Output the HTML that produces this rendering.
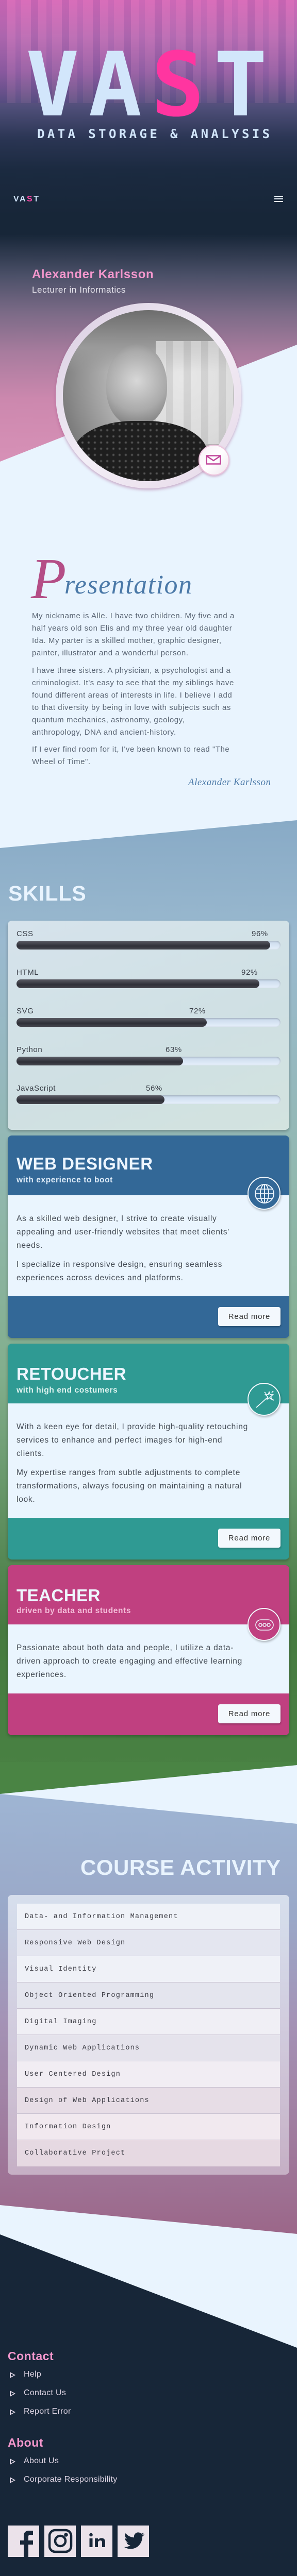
<!DOCTYPE html>
<html style="width:576px;height:5074px;overflow:hidden"><head><meta charset="utf-8"><style>
*{margin:0;padding:0;box-sizing:border-box}
body{width:576px;height:5074px;position:relative;overflow:hidden;background:#e9f4fe;font-family:"Liberation Sans",sans-serif}
.a{position:absolute}
.nw{white-space:nowrap}
.mono{font-family:"DejaVu Sans Mono","Liberation Mono",monospace}
.p{color:#5b6675;font-size:15px;line-height:24px;letter-spacing:.55px;left:62px}
.card{position:absolute;left:15px;width:546px;border-radius:8px;overflow:hidden;box-shadow:0 3px 6px rgba(0,0,0,.25)}
.card .body{position:absolute;left:0;width:546px;background:#eaf5fe}
.card h2{position:absolute;left:17px;color:#eef6ff;font-size:33px;font-weight:bold;letter-spacing:.5px}
.card h3{position:absolute;left:17px;font-size:15.5px;font-weight:bold;letter-spacing:.6px}
.card .t{position:absolute;left:17px;color:#444b55;font-size:15.5px;line-height:26px;letter-spacing:.75px;white-space:nowrap}
.btn{position:absolute;left:408px;width:121px;height:37px;background:#f3f8fd;border-radius:4px;box-shadow:1px 2px 3px rgba(0,0,0,.25);color:#333;font-size:15px;letter-spacing:.8px;text-align:center;line-height:37px}
.ic{position:absolute;left:465px;width:64px;height:64px;border-radius:50%;border:2px solid #f2f8fd;box-shadow:1px 2px 4px rgba(0,0,0,.3)}
.lbl{position:absolute;color:#3a3f48;font-size:15px;letter-spacing:.6px}
.trk{position:absolute;left:17px;width:512px;height:17px;border-radius:9px;background:linear-gradient(#c8d8ea,#e6f0fb);box-shadow:inset 0 1px 3px rgba(0,0,0,.25)}
.fill{position:absolute;left:0;top:0;height:17px;border-radius:9px;background:linear-gradient(#5a5b64,#2f3038 60%,#45464e)}
.row{position:absolute;left:18px;width:510px;height:51px;border-bottom:1px solid #c9c2d2;color:#3c3c44;font-family:"Liberation Mono",monospace;font-size:13.5px;letter-spacing:1.2px;line-height:51px;padding-left:15px}
.fl{position:absolute;left:46px;color:#ded5e4;font-size:16px;letter-spacing:.3px}
.tri{position:absolute;left:19px;width:0;height:0;border-left:11px solid #ded5e4;border-top:6px solid transparent;border-bottom:6px solid transparent}
.tri:after{content:"";position:absolute;left:-9px;top:-3.5px;border-left:6px solid #172638;border-top:3.5px solid transparent;border-bottom:3.5px solid transparent}
.soc{position:absolute;top:4902px;width:61px;height:61px;background:#ebe2ea}
</style></head><body>

<div class="a" style="left:0;top:0;width:576px;height:460px;background:linear-gradient(#d468b4 0px,#b26cb0 70px,#8a5c9e 140px,#4e4e78 210px,#2a3553 270px,#1b2a40 330px,#172638 420px,#172638 460px)"></div>
<div class="a" style="left:0;top:0;width:576px;height:200px;opacity:.3;background:repeating-linear-gradient(90deg,rgba(80,60,140,.6) 0 14px,rgba(230,150,210,.4) 14px 30px,rgba(120,90,170,.5) 30px 41px,rgba(250,170,220,.3) 41px 60px)"></div>
<div class="a" style="left:0;top:0;width:576px;height:200px;background:linear-gradient(rgba(220,110,190,.3),rgba(0,0,0,0))"></div>
<div class="a mono nw" style="left:50px;top:50px;font-size:172px;font-weight:bold;letter-spacing:18px;color:#d2e6fb;line-height:230px">VA<span style="color:#ff35a0">S</span>T</div>
<div class="a mono nw" style="left:72px;top:246px;font-size:24px;font-weight:bold;letter-spacing:5.4px;color:#d2e6fb">DATA STORAGE &amp; ANALYSIS</div>
<div class="a nw" style="left:26px;top:378px;font-size:16px;font-weight:bold;letter-spacing:2.5px;color:#d2e6fb">VA<span style="color:#ff4aa8">S</span>T</div>
<div class="a" style="left:532px;top:380px;width:17px;height:2px;background:#e9f1fa;box-shadow:0 5px 0 #e9f1fa,0 10px 0 #e9f1fa"></div>

<div class="a" style="left:0;top:455px;width:576px;height:460px;background:linear-gradient(#172638 0px,#4b5068 80px,#7a6a86 150px,#a87c9e 230px,#cc88ae 320px,#d992b8 460px)"></div>
<svg class="a" style="left:0;top:660px" width="576" height="260"><polygon points="0,236 576,9 576,260 0,260" fill="#e9f4fe"/></svg>
<div class="a nw" style="left:62px;top:519px;font-size:24px;font-weight:bold;color:#f497cd;letter-spacing:.6px">Alexander Karlsson</div>
<div class="a nw" style="left:62px;top:553px;font-size:17px;color:#e8e6ee;letter-spacing:.6px">Lecturer in Informatics</div>
<div class="a" style="left:108px;top:588px;width:360px;height:360px;border-radius:50%;background:linear-gradient(135deg,#d8cbe0,#f3eef6 50%,#e6d8e8);box-shadow:0 3px 6px rgba(150,60,120,.4)"></div>
<div class="a" style="left:122px;top:602px;width:332px;height:332px;border-radius:50%;overflow:hidden;background:radial-gradient(circle at 70% 40%,#e6e6e6,#bdbdbd 40%,#8a8a8a 70%,#555)">
 <div class="a" style="left:0;top:0;width:332px;height:120px;background:linear-gradient(#6d6d6d,#9a9a9a 60%,rgba(180,180,180,0))"></div>
 <div class="a" style="left:180px;top:60px;width:150px;height:200px;background:repeating-linear-gradient(90deg,#e8e8e8 0 20px,#cfcfcf 20px 34px);opacity:.7"></div>
 <div class="a" style="left:84px;top:66px;width:118px;height:158px;border-radius:50% 50% 45% 45%;background:radial-gradient(circle at 50% 45%,#d8d8d8,#aaa 55%,#6a6a6a)"></div>
 <div class="a" style="left:20px;top:215px;width:260px;height:140px;border-radius:45% 45% 0 0;background:radial-gradient(circle,#555 1px,#1e1e1e 3px);background-size:12px 12px"></div>
</div>
<div class="a" style="left:385px;top:863px;width:60px;height:60px;border-radius:50%;background:linear-gradient(135deg,#f7eef5,#fff 50%,#efe4ee);border:2px solid #ecc3dc;box-shadow:0 2px 4px rgba(160,60,120,.4)"></div>
<svg class="a" style="left:399px;top:883px" width="32" height="20"><rect x="1.5" y="1.5" width="27" height="16" fill="none" stroke="#c0449a" stroke-width="2.5"/><polyline points="1.5,2 15,11 28.5,2" fill="none" stroke="#c0449a" stroke-width="2.5"/></svg>

<div class="a nw" style="left:60px;top:1064px;font-family:'Liberation Serif',serif;font-style:italic;font-size:112px;color:#b44d86;line-height:120px">P</div>
<div class="a nw" style="left:125px;top:1106px;font-family:'Liberation Serif',serif;font-style:italic;font-size:52px;color:#4b79a8;letter-spacing:1.5px;line-height:60px">resentation</div>
<div class="a p nw" style="top:1184px">My nickname is Alle. I have two children. My five and a<br>half years old son Elis and my three year old daughter<br>Ida. My parter is a skilled mother, graphic designer,<br>painter, illustrator and a wonderful person.</div>
<div class="a p nw" style="top:1290px">I have three sisters. A physician, a psychologist and a<br>criminologist. It's easy to see that the my siblings have<br>found different areas of interests in life. I believe I add<br>to that diversity by being in love with subjects such as<br>quantum mechanics, astronomy, geology,<br>anthropology, DNA and ancient-history.</div>
<div class="a p nw" style="top:1443px">If I ever find room for it, I've been known to read "The<br>Wheel of Time".</div>
<div class="a nw" style="left:365px;top:1508px;font-family:'Liberation Serif',serif;font-style:italic;font-size:19px;color:#4b79a8;letter-spacing:.5px">Alexander Karlsson</div>

<svg class="a" style="left:0;top:1590px" width="576" height="1960"><defs><linearGradient id="g1" x1="0" y1="0" x2="0" y2="1"><stop offset="0" stop-color="#88aac6"/><stop offset=".12" stop-color="#9ab9cf"/><stop offset=".35" stop-color="#92b8b0"/><stop offset=".55" stop-color="#82ae8c"/><stop offset=".8" stop-color="#467a40"/><stop offset="1" stop-color="#4a8444"/></linearGradient></defs><polygon points="0,56 576,2 576,1960 0,1960" fill="url(#g1)"/></svg>
<div class="a nw" style="left:16px;top:1711px;font-size:41px;font-weight:bold;color:#e9f4fe;letter-spacing:1px">SKILLS</div>

<div class="card" style="top:1787px;height:406px;background:linear-gradient(160deg,#d6e3ec,#cfe0e3 60%,#d3e3df)">
 <div class="lbl" style="left:17px;top:17px">CSS</div><div class="lbl" style="left:473px;top:17px">96%</div>
 <div class="trk" style="top:39px"><div class="fill" style="width:492px"></div></div>
 <div class="lbl" style="left:17px;top:92px">HTML</div><div class="lbl" style="left:453px;top:92px">92%</div>
 <div class="trk" style="top:114px"><div class="fill" style="width:471px"></div></div>
 <div class="lbl" style="left:17px;top:167px">SVG</div><div class="lbl" style="left:352px;top:167px">72%</div>
 <div class="trk" style="top:189px"><div class="fill" style="width:369px"></div></div>
 <div class="lbl" style="left:17px;top:242px">Python</div><div class="lbl" style="left:306px;top:242px">63%</div>
 <div class="trk" style="top:264px"><div class="fill" style="width:323px"></div></div>
 <div class="lbl" style="left:17px;top:317px">JavaScript</div><div class="lbl" style="left:268px;top:317px">56%</div>
 <div class="trk" style="top:339px"><div class="fill" style="width:287px"></div></div>
</div>

<div class="card" style="top:2204px;height:393px;background:#336897">
 <h2 class="nw" style="top:36px">WEB DESIGNER</h2>
 <h3 class="nw" style="top:78px;color:#dceaf7">with experience to boot</h3>
 <div class="body" style="top:116px;height:196px"></div>
 <div class="ic" style="top:80px;background:#336897"></div>
 <svg class="a" style="left:478px;top:93px" width="40" height="40" fill="none" stroke="#eef6fd" stroke-width="1.8"><circle cx="20" cy="20" r="18"/><ellipse cx="20" cy="20" rx="8" ry="18"/><line x1="20" y1="2" x2="20" y2="38"/><line x1="2" y1="20" x2="38" y2="20"/><line x1="5" y1="11" x2="35" y2="11"/><line x1="5" y1="29" x2="35" y2="29"/></svg>
 <div class="t" style="top:149px">As a skilled web designer, I strive to create visually<br>appealing and user-friendly websites that meet clients'<br>needs.</div>
 <div class="t" style="top:238px">I specialize in responsive design, ensuring seamless<br>experiences across devices and platforms.</div>
 <div class="btn" style="top:333px">Read more</div>
</div>

<div class="card" style="top:2608px;height:419px;background:#2f9a93">
 <h2 class="nw" style="top:40px">RETOUCHER</h2>
 <h3 class="nw" style="top:82px;color:#dff3f0">with high end costumers</h3>
 <div class="body" style="top:116px;height:222px"></div>
 <div class="ic" style="top:76px;background:#2f9a93"></div>
 <svg class="a" style="left:478px;top:88px" width="40" height="40" fill="none" stroke="#eef6fd" stroke-width="1.8"><line x1="4" y1="36" x2="24" y2="18"/><polygon points="29,6 31,11 36,11 32,15 34,20 29,17 25,20 26,15 22,11 27,11"/><line x1="20" y1="6" x2="23" y2="9"/><line x1="37" y1="4" x2="34" y2="7"/><line x1="38" y1="22" x2="35" y2="20"/></svg>
 <div class="t" style="top:149px">With a keen eye for detail, I provide high-quality retouching<br>services to enhance and perfect images for high-end<br>clients.</div>
 <div class="t" style="top:238px">My expertise ranges from subtle adjustments to complete<br>transformations, always focusing on maintaining a natural<br>look.</div>
 <div class="btn" style="top:359px">Read more</div>
</div>

<div class="card" style="top:3038px;height:330px;background:#c04080">
 <h2 class="nw" style="top:40px">TEACHER</h2>
 <h3 class="nw" style="top:80px;color:#f4bcd9">driven by data and students</h3>
 <div class="body" style="top:115px;height:134px"></div>
 <div class="ic" style="top:83px;background:#c04080"></div>
 <svg class="a" style="left:478px;top:96px" width="40" height="40" fill="none" stroke="#eef6fd" stroke-width="1.6"><rect x="3" y="10" width="34" height="20" rx="10"/><circle cx="12" cy="20" r="3"/><circle cx="20" cy="20" r="3"/><circle cx="28" cy="20" r="3"/></svg>
 <div class="t" style="top:148px">Passionate about both data and people, I utilize a data-<br>driven approach to create engaging and effective learning<br>experiences.</div>
 <div class="btn" style="top:270px">Read more</div>
</div>

<svg class="a" style="left:0;top:3420px" width="576" height="1000"><defs><linearGradient id="g2" x1="0" y1="0" x2="0" y2="1"><stop offset="0" stop-color="#9fb8d6"/><stop offset=".3" stop-color="#9aa8c8"/><stop offset=".5" stop-color="#a493b6"/><stop offset="1" stop-color="#9a5e80"/></linearGradient></defs><rect width="576" height="1000" fill="url(#g2)"/><polygon points="0,62 576,6 576,120" fill="#e9f4fe"/><polygon points="0,0 576,0 576,6 0,62" fill="#4a8444"/></svg>
<div class="a nw" style="left:156px;top:3601px;font-size:42px;font-weight:bold;color:#e9f4fe;letter-spacing:.5px">COURSE ACTIVITY</div>
<div class="a" style="left:15px;top:3678px;width:546px;height:543px;border-radius:8px;background:linear-gradient(rgba(235,240,248,.75),rgba(230,225,235,.55))">
 <div class="row nw" style="top:17px;background:#eff2f8">Data- and Information Management</div>
 <div class="row nw" style="top:68px;background:#e4e6f0">Responsive Web Design</div>
 <div class="row nw" style="top:119px;background:#eff1f7">Visual Identity</div>
 <div class="row nw" style="top:170px;background:#e4e5ee">Object Oriented Programming</div>
 <div class="row nw" style="top:221px;background:#f0eff5">Digital Imaging</div>
 <div class="row nw" style="top:272px;background:#e5e3ec">Dynamic Web Applications</div>
 <div class="row nw" style="top:323px;background:#f1edf3">User Centered Design</div>
 <div class="row nw" style="top:374px;background:#e7dde6">Design of Web Applications</div>
 <div class="row nw" style="top:425px;background:#f1e9ef">Information Design</div>
 <div class="row nw" style="top:476px;background:#e6d9e2;border-bottom:none">Collaborative Project</div>
</div>

<svg class="a" style="left:0;top:4270px" width="576" height="804"><polygon points="0,10 576,66 576,804 0,804" fill="#e9f4fe"/><polygon points="0,67 576,287 576,804 0,804" fill="#172638"/></svg>
<div class="a nw" style="left:15px;top:4560px;font-size:23px;font-weight:bold;color:#f497cd;letter-spacing:.5px">Contact</div>
<div class="tri" style="top:4604px"></div><div class="fl nw" style="top:4600px">Help</div>
<div class="tri" style="top:4640px"></div><div class="fl nw" style="top:4636px">Contact Us</div>
<div class="tri" style="top:4676px"></div><div class="fl nw" style="top:4672px">Report Error</div>
<div class="a nw" style="left:15px;top:4728px;font-size:23px;font-weight:bold;color:#f497cd;letter-spacing:.5px">About</div>
<div class="tri" style="top:4772px"></div><div class="fl nw" style="top:4768px">About Us</div>
<div class="tri" style="top:4808px"></div><div class="fl nw" style="top:4804px">Corporate Responsibility</div>

<div class="soc" style="left:15px"><svg width="61" height="61"><path d="M40 61V37h9v-8h-9v-7c0-3 1-4 4-4h5v-8h-7c-8 0-11 4-11 11v8h-7v8h7v24z" fill="#172638"/></svg></div>
<div class="soc" style="left:86px"><svg width="61" height="61" fill="none" stroke="#172638" stroke-width="4.5"><rect x="10" y="9" width="42" height="42" rx="11"/><circle cx="31" cy="30" r="10"/><circle cx="42" cy="18" r="1.5" fill="#172638"/></svg></div>
<div class="soc" style="left:157px"><svg width="61" height="61" fill="#172638"><circle cx="19.5" cy="18" r="3.3"/><rect x="16.5" y="25" width="6" height="17"/><path d="M27 25h6v3c1.5-2.5 4-3.5 7-3.5 5 0 7 3 7 8V42h-6V33c0-2.5-1-4-3.3-4S33 30.5 33 33v9h-6z"/></svg></div>
<div class="soc" style="left:228px"><svg width="61" height="61"><path d="M52 17c-1.5.7-3 1-4.6 1.3 1.7-1 2.9-2.6 3.5-4.4-1.6.9-3.3 1.6-5.1 2-1.5-1.6-3.6-2.5-5.9-2.5-4.4 0-8 3.6-8 8 0 .6.1 1.2.2 1.8C25.4 23 19.5 19.8 15.6 15c-.7 1.2-1.1 2.5-1.1 4 0 2.8 1.4 5.2 3.6 6.7-1.3 0-2.5-.4-3.6-1 0 3.9 2.8 7.1 6.4 7.9-1.2.3-2.4.4-3.6.1 1 3.2 4 5.5 7.5 5.6-3.4 2.7-7.7 4-12 3.5 3.6 2.3 7.8 3.6 12.3 3.6 14.7 0 22.8-12.2 22.8-22.8v-1c1.6-1.1 2.9-2.5 4-4.1z" fill="#172638"/></svg></div>
<div class="a" style="left:0;top:5072px;width:576px;height:2px;background:#3a5a7a"></div>
</body></html>
